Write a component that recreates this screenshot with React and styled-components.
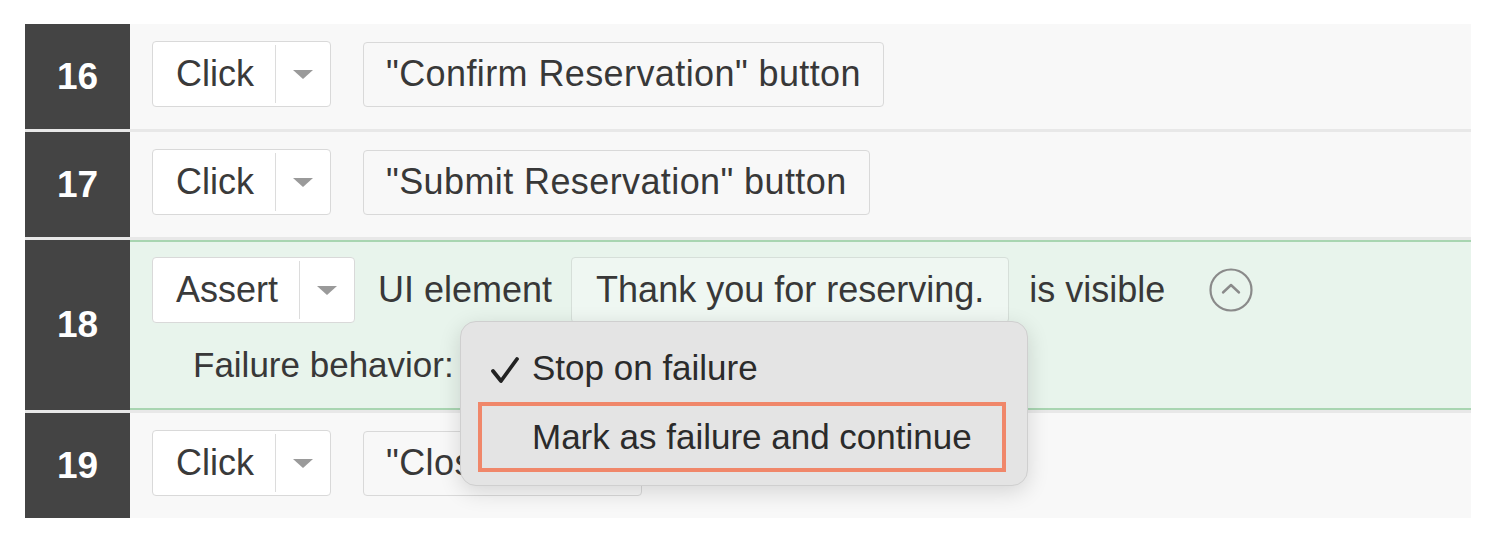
import React from 'react';
import styled, { createGlobalStyle } from 'styled-components';

const GlobalStyle = createGlobalStyle`
  body {
    margin: 0;
    background: #fff;
    font-family: 'Liberation Sans', Arial, sans-serif;
  }
`;

const steps = [
  { n: 16, action: 'Click', target: '"Confirm Reservation" button' },
  { n: 17, action: 'Click', target: '"Submit Reservation" button' },
  { n: 18, action: 'Assert', assert: true },
  { n: 19, action: 'Click', target: '"Close" button' },
];

const App = () => (
  <>
    <GlobalStyle />
    <List>
      {steps.map((s) => (
        <Row key={s.n}>
          <NumCell>{s.n}</NumCell>
          <Content $active={s.assert}>
            <Line>
              <Select $gap={s.assert ? 23 : 32}>
                <SelectLabel>{s.action}</SelectLabel>
                <Caret>
                  <CaretShape />
                </Caret>
              </Select>
              {s.assert ? (
                <>
                  <Text>UI element</Text>
                  <Element>Thank you for reserving.</Element>
                  <Text>is visible</Text>
                  <CollapseIcon />
                </>
              ) : (
                <Target>{s.target}</Target>
              )}
            </Line>
            {s.assert && (
              <FailureLine>
                <Text>Failure behavior:</Text>
                <Menu>
                  <MenuItem>
                    <Check />
                    Stop on failure
                  </MenuItem>
                  <MenuItem $highlight>
                    <CheckSpace />
                    Mark as failure and continue
                  </MenuItem>
                </Menu>
              </FailureLine>
            )}
          </Content>
        </Row>
      ))}
    </List>
  </>
);

export default App;

const CollapseIcon = () => (
  <IconWrap>
    <svg width="46" height="46" viewBox="0 0 46 46">
      <circle cx="23" cy="23" r="20.5" fill="none" stroke="#8a8a8a" strokeWidth="2.2" />
      <path d="M15 25.5 L23 18 L31 25.5" fill="none" stroke="#8a8a8a" strokeWidth="2.4" strokeLinecap="round" strokeLinejoin="round" />
    </svg>
  </IconWrap>
);

const Check = () => (
  <CheckBox>
    <svg width="30" height="30" viewBox="0 0 30 30">
      <path d="M3 16 L11 26 L27 4" fill="none" stroke="#222" strokeWidth="3.8" strokeLinecap="round" strokeLinejoin="round" />
    </svg>
  </CheckBox>
);

const List = styled.div`
  display: flex;
  flex-direction: column;
  gap: 3px;
  width: 1446px;
  margin: 24px 0 0 25px;
  background: #e8e8e8;
`;

const Row = styled.div`
  display: flex;
`;

const NumCell = styled.div`
  width: 105px;
  flex-shrink: 0;
  display: flex;
  align-items: center;
  justify-content: center;
  background: #444;
  color: #fff;
  font-size: 37px;
  font-weight: 700;
`;

const Content = styled.div`
  flex: 1;
  display: flex;
  flex-direction: column;
  padding: ${({ $active }) => ($active ? '15px 22px 23px' : '17px 22px 22px')};
  background: ${({ $active }) => ($active ? '#e8f4ec' : '#f8f8f8')};
  border-top: ${({ $active }) => ($active ? '2px solid #a8d5b1' : 'none')};
  border-bottom: ${({ $active }) => ($active ? '2px solid #a8d5b1' : 'none')};
`;

const Line = styled.div`
  display: flex;
  align-items: center;
  height: 66px;
  color: #383838;
  font-size: 36px;
`;

const Select = styled.div`
  display: flex;
  align-items: stretch;
  height: 66px;
  box-sizing: border-box;
  background: #fff;
  border: 1px solid #d9d9d9;
  border-radius: 4px;
  margin-right: ${({ $gap }) => $gap}px;
`;

const SelectLabel = styled.div`
  display: flex;
  align-items: center;
  padding: 0 21px 0 23px;
  color: #3a3a3a;
`;

const Caret = styled.div`
  width: 54px;
  display: flex;
  align-items: center;
  justify-content: center;
  border-left: 1px solid #dcdcdc;
  margin: 3px 0;
`;

const CaretShape = styled.span`
  width: 0;
  height: 0;
  border-left: 10px solid transparent;
  border-right: 10px solid transparent;
  border-top: 9px solid #9a9a9a;
`;

const Target = styled.div`
  display: flex;
  align-items: center;
  height: 65px;
  box-sizing: border-box;
  padding: 0 22px;
  background: #f8f8f8;
  border: 1px solid #d9d9d9;
  border-radius: 4px;
  color: #383838;
  letter-spacing: 0.4px;
`;

const Text = styled.span`
  color: #383838;
  white-space: nowrap;
`;

const Element = styled.div`
  display: flex;
  align-items: center;
  height: 66px;
  box-sizing: border-box;
  margin: 0 20px 0 19px;
  padding: 0 24px;
  background: #eff7f2;
  border: 1px solid #d6dfd9;
  border-radius: 4px;
  color: #383838;
`;

const IconWrap = styled.span`
  display: flex;
  margin-left: 43px;
`;

const FailureLine = styled.div`
  position: relative;
  display: flex;
  align-items: center;
  height: 40px;
  margin-top: 22px;
  padding-left: 41px;
  font-size: 35px;
`;

const Menu = styled.div`
  position: absolute;
  left: 308px;
  top: -24px;
  width: 568px;
  box-sizing: border-box;
  padding: 12px 21px 13px 17px;
  background: #e4e4e4;
  border: 1px solid #cfcfcf;
  border-radius: 16px;
  box-shadow: 0 6px 22px rgba(0, 0, 0, 0.14);
  z-index: 2;
`;

const MenuItem = styled.div`
  display: flex;
  align-items: center;
  height: ${({ $highlight }) => ($highlight ? '70px' : '68px')};
  box-sizing: border-box;
  padding-left: 8px;
  border: ${({ $highlight }) => ($highlight ? '4px solid #f0876a' : '4px solid transparent')};
  color: #2b2b2b;
  font-size: 35px;
  white-space: nowrap;
`;

const CheckBox = styled.span`
  display: flex;
  width: 42px;
  margin-top: 4px;
`;

const CheckSpace = styled.span`
  width: 42px;
`;
